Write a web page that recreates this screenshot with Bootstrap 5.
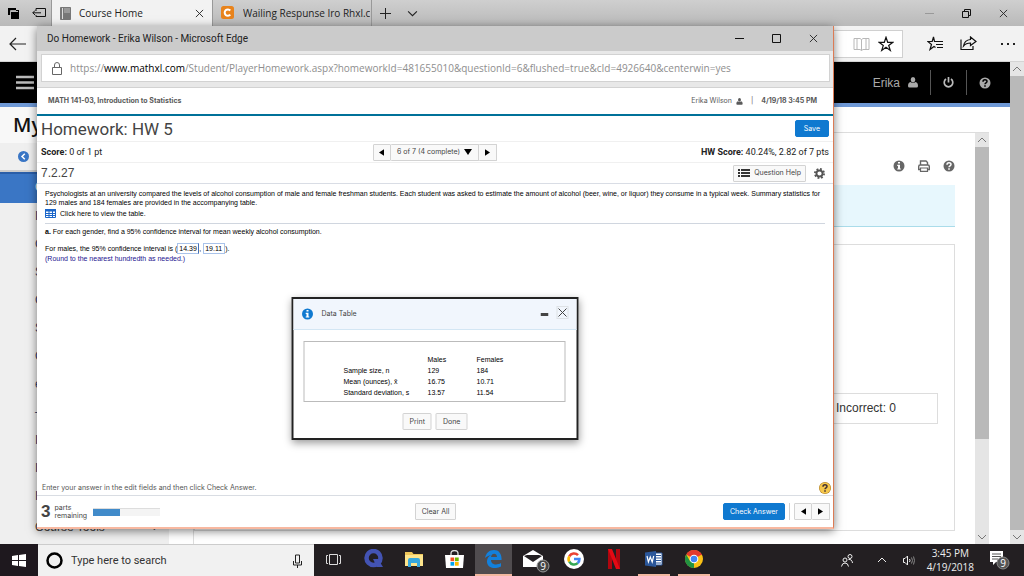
<!DOCTYPE html>
<html lang="en">
<head>
<meta charset="utf-8">
<meta name="viewport" content="width=device-width, initial-scale=1">
<title>Do Homework - Erika Wilson</title>
<link href="https://cdn.jsdelivr.net/npm/bootstrap@5.3.0/dist/css/bootstrap.min.css" rel="stylesheet">
<style>
:root{--edge:"Open Sans","Noto Sans",sans-serif;--page:"Liberation Sans",Arial,sans-serif;--ui:Roboto,"Liberation Sans",sans-serif;--mini:Inter,"Liberation Sans",sans-serif}
body{font-family:var(--page);font-size:12px;line-height:16px;color:#222}
svg{display:block;flex:none}
button{font:inherit;color:inherit;padding:0;border:0;background:none}
.screen{min-height:100vh}
/* main browser window */
.tabstrip{height:26px;background:linear-gradient(#cfcfcf,#b9b9b9);font:10px/14px var(--edge);color:#222}
.tabstrip .tools{width:52px;border-right:1px solid #999}
.tab-on,.tab-off{width:160px;font-size:10px}
.tab-on{background:#f2f2f2}
.tab-off{border-left:1px solid #999;border-right:1px solid #999}
.tab-off .label{font-size:10px;overflow:hidden;white-space:nowrap}
.navrow{height:36px;background:#f2f2f2;border-bottom:1px solid #d4d4d4}
.addr-end{width:80px;height:28px;background:#fff;border:1px solid #d0d0d0}
.blackbar{height:45px;background:#000;border-bottom:4px solid #6f99d6;color:#aaa;font:12px/16px var(--page)}
.blackbar .sep{width:1px;height:25px;background:#555}
.cell{width:35px;display:flex;justify-content:center}
.rail{width:14px;background:#b9b9b9}
.rail button{height:14px;background:#e5e5e5;color:#777}
.side{width:169px;background:#efefef}
.side-title{height:36px;background:#f8f8f8;padding-left:13px;font:600 20px/36px var(--edge);color:#111}
.side-home{height:29px;border-bottom:2px solid #ccc;padding-left:18px}
.side-list a{display:block;height:28px;padding-left:35px;font:12px/27px var(--page);color:#2f3f6b;text-decoration:none}
.side-list a.here{background:#3a76c5;color:#fff;height:31px;line-height:27px;border-top:2px solid #2a5ea8}
.side-list a.last{line-height:32px;color:#444}
.course{border-left:1px solid #ddd;border-top:1px solid #ddd;margin:25px 0 0 24px}
.course-main{padding-right:20px}
.course-icons{height:52px;padding-top:27px;color:#666;gap:13px}
.notice{height:42px;background:#e7f7fd;border-bottom:1px solid #aadcea}
.panel{margin-top:17px;margin-bottom:13px;border:1px solid #ddd}
.score-box{height:31px;width:120px;margin:148px 16px 0 auto;border:1px solid #ddd;padding-right:41px;font:12px/29px var(--page);color:#333;text-align:right;white-space:nowrap}
.inner-rail{width:14px;background:#e5e5e5}
.inner-rail button{height:14px;color:#777}
.inner-rail .thumb{background:#b9b9b9;flex:0 0 71%}
.outer{width:21px}
/* pop-up window */
.popwin{top:26px;right:190px;bottom:15px;left:37px;background:#fff;border-right:1px solid #dc7b55;border-bottom:2px solid #f8b8a0;box-shadow:0 2px 9px rgba(0,0,0,.5)}
.poptitle{height:25px;background:#cbcbcb;font:10px/14px var(--ui);padding:0 15px 0 10px}
.popurl{height:37px;background:#e8e8e8;border-bottom:1px solid #d2d2d2;padding:3px 3px 5px 4px}
.urlbox{background:#fff;border:1px solid #d2d2d2;font:10px/14px var(--edge);color:#8e8e8e;padding-left:10px}
.coursebar{height:28px;border-bottom:2px solid #007199;font:7px/12px var(--mini);color:#5a5a5a;padding:0 16px 0 11px}
.hw-row{padding:0 4px;border-bottom:1px solid #f0f0f0;color:#444}
.hw-title{height:26px;font:17px/22px var(--ui)}
.hw-score{height:21px;font:9px/12px var(--ui);color:#222}
.hw-id{height:21px;font:12px/16px var(--page);border-bottom-color:#d9dde5}
.btn-page{height:17px;border:1px solid #d3d3d3;border-radius:1px;background:#f9f9f9;font:7px/12px var(--mini);color:#444;padding:0 6px;display:flex;align-items:center;justify-content:center}
.btn-blue{background:#0f79d0;border-color:#0f79d0;color:#fff;border-radius:2px}
.pager>*+*{border-left:0}
.pager .step{width:18px;padding:0}
.question{padding:5px 8px;font:7px/9px var(--page);color:#000}
.question p,.question form{margin:0}
.question a{margin-top:2px}
.question form{margin-top:7px}
.question hr{margin:5px 0 3px;border-color:#bcc5d2;opacity:.7}
.answer{width:22px;height:11px;border:1px solid #a9c3ea;padding:0 1px;font:7px/9px var(--page);color:#000;outline:0}
.answer.cur{border-right-color:#456fb5}
.prompt{font:7px/12px var(--mini);color:#555;padding:0 2px 0 5px;height:15px}
.bottombar{height:32px;border-top:1px solid #d9dde3;padding:0 3px 0 4px;font:7px/8px var(--mini);color:#444}
.bottombar .count{font:700 17px/20px var(--page)}
.bar{width:67px;height:8px;background:#f4f4f4;border-radius:0;border-top:1px solid #ddd;margin-left:6px}
.bar div{background:#418bca}
.slot{flex:1 1 0}
/* data table dialog */
.datadlg{top:271px;width:287px;border:2px solid #222;background:#fff;box-shadow:0 3px 8px rgba(0,0,0,.4);font:7px/11px var(--page)}
.dlg-head{height:31px;background:#f1f6fd;border-bottom:1px solid #d3e6f4;padding:0 8px 0 8px;font:7px/12px var(--mini);color:#444}
.dlg-box{margin:11px 11px 11px 10px;border:1px solid #bbb;padding:12px 0 3px 39px}
.stats{border-collapse:collapse;color:#000;font-size:7px;line-height:11px}
.stats th,.stats td{padding:0;font-weight:400;text-align:left;height:11px}
.stats .w1{width:84px}.stats .w2{width:49px}
/* taskbar */
.taskbar{height:32px;background:#231f22;color:#eee;font:10px/14px var(--edge)}
.start{width:38px;background:#1e181e}
.search{width:276px;background:#f1f1f1;border-top:1px solid #ccc;padding:0 12px 0 8px}
.search input{border:0;background:none;outline:0;font:11px/16px var(--ui);color:#333;padding:0;min-width:0}
.search input::placeholder{color:#333;opacity:1}
.apps button{width:40px;border-bottom:2px solid transparent;display:flex;align-items:center;justify-content:center}
.apps .live{border-bottom-color:#f2b8a0}
.apps .short{width:32px;margin:0 4px}
.apps .active{background:#504c4f;width:37px;margin:0 2px 0 1px}
.tray{padding-right:14px}
</style>
</head>
<body>
<svg width="0" height="0" class="position-absolute" aria-hidden="true">
<symbol id="x" viewBox="0 0 10 10"><path d="M1 1l8 8M9 1L1 9" stroke="currentColor" fill="none"/></symbol>
<symbol id="up" viewBox="0 0 10 6"><path d="M1 5l4-4 4 4" stroke="currentColor" fill="none"/></symbol>
<symbol id="down" viewBox="0 0 10 6"><path d="M1 1l4 4 4-4" stroke="currentColor" fill="none"/></symbol>
<symbol id="user" viewBox="0 0 10 11"><path d="M5 0a2.400 2.700 0 012.300 2.700C7.300 4.300 6.200 5.400 5 5.400S2.700 4.300 2.700 2.700A2.400 2.700 0 015 0zM2.500 5Q5 7 7.500 5 10 5.600 10 9q0 1.500-1.500 1.500h-7Q0 10.500 0 9 0 5.600 2.500 5z" fill="currentColor"/></symbol>
<symbol id="help" viewBox="0 0 12 12"><circle cx="6" cy="6" r="5.500" fill="currentColor"/><path d="M4 4.700C4 2 8 2 8 4.500 8 5.900 6 5.800 6 7.300" fill="none" stroke="var(--k)" stroke-width="1.500"/><path d="M5.200 8.200h1.600v1.500H5.200z" fill="var(--k)"/></symbol>
<symbol id="info" viewBox="0 0 12 12"><circle cx="6" cy="6" r="5.500" fill="currentColor"/><path d="M5 2h2v1.600H5zM4.200 4.800H7v3.600h.8v1.200H4.200V8.400H5V6h-.8z" fill="#fff"/></symbol>
<symbol id="tl" viewBox="0 0 6 8"><path d="M6 0v8L0 4z"/></symbol>
<symbol id="tr" viewBox="0 0 6 8"><path d="M0 0v8l6-4z"/></symbol>
</svg>
<div class="screen d-flex flex-column">
<div class="flex-grow-1 d-flex flex-column position-relative overflow-hidden">

  <header class="tabstrip d-flex">
    <div class="tools d-flex align-items-center justify-content-between ps-2 pe-1">
      <svg width="12" height="11"><path d="M0 0h8v2h3v9H3V7H0z" fill="#000"/><path d="M3 3.500h7" stroke="#bbb"/><path d="M2.500 7V2.500H8" stroke="#aaa" fill="none"/></svg>
      <svg width="15" height="10" fill="none" stroke="#111"><path d="M4 3V.5h9.500v8H4V7M.8 4.800H9M3 2.500L.8 4.800 3 7"/></svg>
    </div>
    <div class="tab-on d-flex align-items-center px-2">
      <svg width="11" height="13" class="me-2"><path d="M.5.500h10v12H.5z" fill="#777" stroke="#777"/><path d="M2 1h1v11H2z" fill="#ddd"/><path d="M4 1h6v5H4z" fill="#999"/></svg>
      <span class="flex-grow-1">Course Home</span>
      <button aria-label="Close tab"><svg width="9" height="9"><use href="#x"/></svg></button>
    </div>
    <div class="tab-off d-flex align-items-center ps-1">
      <svg width="14" height="14" class="ms-1 me-2"><rect width="13" height="13" rx="2.500" fill="#e8831c"/><path d="M9.300 4.500a3.200 3.200 0 100 4.200" fill="none" stroke="#fff" stroke-width="2"/></svg>
      <span class="label">Wailing Respunse Iro Rhxl.c</span>
    </div>
    <button class="ms-2" aria-label="New tab"><svg width="11" height="11" stroke="#222"><path d="M5.500 0v11M0 5.500h11"/></svg></button>
    <button class="ms-3" aria-label="Tab list"><svg width="11" height="7"><use href="#down"/></svg></button>
    <div class="ms-auto d-flex align-items-center gap-4 pe-3">
      <button class="me-1" aria-label="Minimize"><svg width="9" height="9" stroke="#999"><path d="M0 4.500h9"/></svg></button>
      <button class="me-1" aria-label="Restore"><svg width="9" height="9" fill="none" stroke="#111"><path d="M.5 2.500h6v6h-6zM2.500 2V.5h6v6H7"/></svg></button>
      <button aria-label="Close"><svg width="9" height="9"><use href="#x"/></svg></button>
    </div>
  </header>

  <div class="navrow d-flex align-items-center justify-content-between">
    <button class="ms-2" aria-label="Back"><svg width="18" height="14" fill="none" stroke="#222" stroke-width="1.200"><path d="M2 7h16M8 1L2 7l6 6"/></svg></button>
    <div class="d-flex align-items-center pe-2">
      <div class="addr-end d-flex align-items-center justify-content-end gap-2 pe-2">
        <svg width="17" height="14" fill="none" stroke="#b8b8b8"><path d="M1 1.500h6l1.500 1L10 1.500h6v11h-6l-1.500 1-1.500-1H1zM8.500 2.500v11M4 1v11M13 1v11"/></svg>
        <svg width="16" height="16" fill="none" stroke="#111" stroke-width="1.200"><path d="M8 1.300l1.700 5h5.200l-4.200 3.100 1.600 5L8 11.300l-4.300 3.100 1.600-5L1.100 6.300h5.200z"/></svg>
      </div>
      <button class="ms-4" aria-label="Favorites"><svg width="17" height="15" fill="none" stroke="#111" stroke-width="1.200"><path d="M10 5.500H7.500L6.500 1 5.200 5.500H.8l3.700 3-1.500 5 4-3 1.500 1M10 5.500h6M9 8.500h7M10 11.500h6"/></svg></button>
      <button class="ms-3" aria-label="Share"><svg width="17" height="15" fill="none" stroke="#111" stroke-width="1.200"><path d="M1 3.500v10h12V10M10.500 1L16 5.500l-5.500 4V7Q6 7 3.500 10 4.500 4 10.500 3.500z"/></svg></button>
      <button class="ms-4" aria-label="More"><svg width="15" height="4" fill="#222"><path d="M0 1h2v2H0zM6 1h2v2H6zM12 1h2v2h-2z"/></svg></button>
    </div>
  </div>

  <div class="flex-grow-1 d-flex">
    <div class="flex-grow-1 d-flex flex-column">
      <div class="blackbar d-flex align-items-center">
        <svg width="19" height="15" class="ms-3" stroke="#bbb" stroke-width="2.500"><path d="M0 2h18M0 7.500h18M0 13h18"/></svg>
        <div class="ms-auto d-flex align-items-center pe-2">
          <span>Erika</span><svg width="10" height="11" class="ms-2 me-2"><use href="#user"/></svg>
          <span class="sep ms-1"></span>
          <button class="cell" aria-label="Sign out"><svg width="11" height="12" fill="none" stroke="#bbb" stroke-width="1.700"><path d="M5.500 0v5.500M3 2a4.300 4.300 0 105 0"/></svg></button>
          <span class="sep"></span>
          <button class="cell" aria-label="Help" style="--k:#000"><svg width="12" height="12"><use href="#help"/></svg></button>
        </div>
      </div>
      <div class="flex-grow-1 d-flex">
        <aside class="side">
          <div class="side-title">My</div>
          <div class="side-home d-flex align-items-center"><svg width="11" height="11"><circle cx="5.500" cy="5.500" r="5.500" fill="#3a76c5"/><path d="M6.800 2.700L4 5.500l2.800 2.800" fill="none" stroke="#fff" stroke-width="1.500"/></svg><span class="ms-1 ps-1">I</span></div>
          <nav class="side-list">
            <a class="here" href="#">C</a><a href="#">I</a><a href="#">C</a><a href="#">S</a><a href="#">C</a><a href="#">S</a><a href="#">C</a><a href="#">e</a><a href="#">–</a><a href="#">I</a><a href="#">I</a><a href="#">I</a><a class="last d-flex justify-content-between pe-2" href="#"><span>Course Tools</span><span class="pe-1">›</span></a>
          </nav>
        </aside>
        <main class="flex-grow-1 d-flex">
          <div class="course flex-grow-1 d-flex">
            <div class="course-main flex-grow-1 d-flex flex-column">
              <div class="course-icons d-flex justify-content-end" style="--k:#fff">
                <svg width="12" height="12"><use href="#info"/></svg>
                <svg width="12" height="12"><path d="M2.500 5V1H8l1.500 1.500V5M.7 9.500v-3Q.7 5 2 5h8q1.300 0 1.300 1.500v3z" fill="none" stroke="currentColor" stroke-width="1.400"/><path d="M2.500 8h7v3.300h-7z" fill="#fff" stroke="currentColor" stroke-width="1.200"/></svg>
                <svg width="12" height="12"><use href="#help"/></svg>
              </div>
              <div class="notice"></div>
              <div class="panel flex-grow-1"><div class="score-box">Incorrect: 0</div></div>
            </div>
            <div class="inner-rail d-flex flex-column">
              <button aria-label="Scroll up"><svg width="10" height="6" class="mx-auto"><use href="#up"/></svg></button>
              <div class="thumb"></div>
              <button class="mt-auto" aria-label="Scroll down"><svg width="10" height="6" class="mx-auto"><use href="#down"/></svg></button>
            </div>
          </div>
          <div class="outer"></div>
        </main>
      </div>
    </div>
    <div class="rail d-flex flex-column justify-content-between">
      <button aria-label="Page up"><svg width="10" height="6" class="mx-auto"><use href="#up"/></svg></button>
      <button aria-label="Page down"><svg width="10" height="6" class="mx-auto"><use href="#down"/></svg></button>
    </div>
  </div>

  <section class="popwin position-absolute d-flex flex-column">
    <div class="poptitle d-flex align-items-center">
      <span class="flex-grow-1">Do Homework - Erika Wilson - Microsoft Edge</span>
      <button class="me-4" aria-label="Minimize"><svg width="9" height="9" stroke="#111"><path d="M0 4.500h9"/></svg></button>
      <button class="mx-1" aria-label="Maximize"><svg width="9" height="9" fill="none" stroke="#111"><path d="M.5.500h8v8h-8z"/></svg></button>
      <button class="ms-4" aria-label="Close"><svg width="9" height="9"><use href="#x"/></svg></button>
    </div>
    <div class="popurl d-flex">
      <div class="urlbox flex-grow-1 d-flex align-items-center">
        <svg width="10" height="13" class="me-2" fill="none" stroke="#666"><path d="M.5 5.500h9v7h-9zM2.500 5.500V3q0-2.500 2.500-2.500T7.500 3v2.500"/></svg>
        <span>https://<span class="text-black">www.mathxl.com</span>/Student/PlayerHomework.aspx?homeworkId=481655010&amp;questionId=6&amp;flushed=true&amp;cId=4926640&amp;centerwin=yes</span>
      </div>
    </div>
    <div class="coursebar d-flex align-items-center">
      <b class="me-auto">MATH 141-03, Introduction to Statistics</b>
      <span>Erika Wilson</span><svg width="7" height="7" class="ms-1"><use href="#user"/></svg><span class="mx-2">|</span><b>4/19/18 3:45 PM</b>
    </div>
    <div class="hw-row hw-title d-flex align-items-center"><span class="flex-grow-1">Homework: HW 5</span><button class="btn-page btn-blue px-2">Save</button></div>
    <div class="hw-row hw-score d-flex align-items-center">
      <div class="slot"><b>Score:</b> 0 of 1 pt</div>
      <div class="pager d-flex">
        <button class="btn-page step" aria-label="Previous question"><svg width="5" height="7"><use href="#tl"/></svg></button>
        <button class="btn-page">6 of 7 (4 complete)<svg width="8" height="6" class="ms-1"><path d="M0 0h8L4 6z"/></svg></button>
        <button class="btn-page step" aria-label="Next question"><svg width="5" height="7"><use href="#tr"/></svg></button>
      </div>
      <div class="slot text-end"><b>HW Score:</b> 40.24%, 2.82 of 7 pts</div>
    </div>
    <div class="hw-row hw-id d-flex align-items-center">
      <span class="flex-grow-1">7.2.27</span>
      <button class="btn-page px-1 me-2"><svg width="12" height="8" class="me-1" stroke="#333" stroke-width="2"><path d="M3 1h9M3 4h9M3 7h9M0 1h2M0 4h2M0 7h2"/></svg>Question Help</button>
      <button aria-label="Settings"><svg width="11" height="11" viewBox="0 0 12 12" class="me-1"><circle cx="6" cy="6" r="3.300" fill="none" stroke="#555" stroke-width="2"/><circle cx="6" cy="6" r="5" fill="none" stroke="#555" stroke-width="2" stroke-dasharray="2 1.927"/></svg></button>
    </div>
    <div class="question flex-grow-1">
      <p>Psychologists at an university compared the levels of alcohol consumption of male and female freshman students. Each student was asked to estimate the amount of alcohol (beer, wine, or liquor) they consume in a typical week. Summary statistics for 129 males and 184 females are provided in the accompanying table.</p>
      <a href="#" class="d-flex align-items-center text-reset text-decoration-none gap-1"><svg width="11" height="9"><path d="M.5.500h10v8H.5z" fill="#fff" stroke="#1b66c9"/><path d="M0 0h11v2.500H0z" fill="#1b66c9"/><path d="M4 2v7M7.500 2v7M0 4.500h11M0 6.500h11" stroke="#1b66c9"/></svg>Click here to view the table.</a>
      <hr>
      <p><b>a.</b> For each gender, find a 95% confidence interval for mean weekly alcohol consumption.</p>
      <form class="d-flex align-items-center"><label for="lo">For males, the 95% confidence interval is (</label><input id="lo" class="answer cur" value="14.39"><label for="hi">,&nbsp;</label><input id="hi" class="answer" value="19.11">).</form>
      <p style="color:#1c1390">(Round to the nearest hundredth as needed.)</p>
    </div>
    <div class="prompt d-flex align-items-center justify-content-between">
      <span>Enter your answer in the edit fields and then click Check Answer.</span>
      <button aria-label="Tips"><svg width="12" height="12" viewBox="0 0 12 12" style="--k:#433"><circle cx="6" cy="6" r="6" fill="#a97924"/><use href="#help" color="#f5c74c"/></svg></button>
    </div>
    <div class="bottombar d-flex align-items-center">
      <div class="slot d-flex align-items-center"><span class="count me-1">3</span><span>parts<br>remaining</span>
        <div class="progress bar"><div class="progress-bar" style="width:40%"></div></div></div>
      <button class="btn-page">Clear All</button>
      <div class="slot d-flex justify-content-end gap-1">
        <button class="btn-page btn-blue">Check Answer</button><div class="vr"></div>
        <div class="pager d-flex"><button class="btn-page step" aria-label="Previous"><svg width="5" height="7"><use href="#tl"/></svg></button><button class="btn-page step" aria-label="Next"><svg width="5" height="7"><use href="#tr"/></svg></button></div>
      </div>
    </div>

    <div class="datadlg position-absolute start-50 translate-middle-x">
      <div class="dlg-head d-flex align-items-center">
        <svg width="12" height="12" class="me-2" color="#0f79d0"><use href="#info"/></svg><span class="flex-grow-1">Data Table</span>
        <button class="me-2" aria-label="Minimize dialog"><svg width="8" height="3"><path d="M0 0h8v3H0z" fill="#444"/></svg></button>
        <button class="mb-1" aria-label="Close dialog"><svg width="12" height="13" class="border"><use href="#x"/></svg></button>
      </div>
      <div class="dlg-box">
        <table class="stats">
          <thead><tr><td class="w1"></td><th class="w2">Males</th><th>Females</th></tr></thead>
          <tbody><tr><th>Sample size, n</th><td>129</td><td>184</td></tr>
          <tr><th>Mean (ounces), x̄</th><td>16.75</td><td>10.71</td></tr>
          <tr><th>Standard deviation, s</th><td>13.57</td><td>11.54</td></tr></tbody>
        </table>
      </div>
      <div class="d-flex justify-content-center gap-1 pb-2"><button class="btn-page">Print</button><button class="btn-page">Done</button></div>
    </div>
  </section>
</div>

<footer class="taskbar d-flex">
  <button class="start d-flex align-items-center justify-content-center" aria-label="Start"><svg width="14" height="13" fill="#fff"><path d="M0 2l6-1v5H0zM7 .9L14 0v6H7zM0 7h6v5l-6-1zM7 7h7v6l-7-1z"/></svg></button>
  <label class="search d-flex align-items-center gap-2"><svg width="17" height="17"><circle cx="8.500" cy="8.500" r="7" fill="none" stroke="#000" stroke-width="2.500"/></svg>
    <input class="flex-grow-1" type="text" placeholder="Type here to search" aria-label="Search">
    <svg width="9" height="14" fill="none" stroke="#222"><path d="M2.500 1h4v8h-4zM.5 7v4h8V7M4.500 11v3"/></svg></label>
  <div class="apps d-flex">
    <button aria-label="Task view"><svg width="16" height="11" fill="none" stroke="#ddd"><path d="M3.500.500h8v10h-8zM2 1.500H.5v8H2M13 1.500h1.500v8H13"/></svg></button>
    <button aria-label="Quicken"><svg width="20" height="20"><circle cx="9.500" cy="9" r="7" fill="none" stroke="#4353b3" stroke-width="4.500"/><path d="M9 10h5l5 8h-6z" fill="#4353b3"/></svg></button>
    <button aria-label="File Explorer"><svg width="18" height="15"><path d="M0 0h7l1.500 2H18v12H0z" fill="#eec65a"/><path d="M0 3h18v11H0z" fill="#fde48c"/><path d="M3 15V8q0-2 2-2h8q2 0 2 2v7h-3v-4H6v4z" fill="#37a8dd"/></svg></button>
    <button aria-label="Store"><svg width="19" height="19"><path d="M6 6V3.500a3.500 3 0 017 0V6" fill="none" stroke="#ddd" stroke-width="1.300"/><path d="M0 5h19l-1 13H1z" fill="#fff"/><path d="M5.500 7.500h3.700v3.700H5.500z" fill="#f25022"/><path d="M10 7.500h3.700v3.700H10z" fill="#6bb700"/><path d="M5.500 12h3.700v3.700H5.500z" fill="#00a4ef"/><path d="M10 12h3.700v3.700H10z" fill="#ffb900"/></svg></button>
    <button class="live active" aria-label="Edge"><svg width="17" height="18"><path d="M0 8C1 3 4 0 9 0c5 0 8 4 7.500 10H6c0 5 6 5.500 10 3v3.500C9 20 1.500 17.500 2 11c.2-3 2-5 4-6C3.500 5.500 1.500 6.500 0 8zm6-1h6C12 2.500 6.500 2.500 6 7z" fill="#1380dc"/></svg></button>
    <button aria-label="Mail"><svg width="27" height="23" class="ms-1 mt-1"><path d="M0 6l10-6 10 6v11H0z" fill="#fff"/><path d="M1 6l9 6 9-6-3-1H4z" fill="#231f22"/><circle cx="20" cy="16" r="6" fill="#444" stroke="#999"/><text x="20" y="19.500" font-size="10" text-anchor="middle" fill="#fff">9</text></svg></button>
    <button aria-label="Google"><svg width="20" height="20" viewBox="0 0 20 20"><circle cx="10" cy="10" r="10" fill="#fff"/><g fill="none" stroke-width="2.600"><path d="M14 6.200A5.400 5.400 0 005.300 7.300" stroke="#ea4335"/><path d="M5.300 7.300a5.400 5.400 0 000 5.400" stroke="#fbbc05"/><path d="M5.300 12.700a5.400 5.400 0 008.400 1.400" stroke="#34a853"/><path d="M13.700 14.100A5.400 5.400 0 0015.400 10H10" stroke="#4285f4"/></g></svg></button>
    <button aria-label="Netflix"><svg width="12" height="20"><path d="M0 0h4v20l-4 .3zM8 0h4v20l-4-.2z" fill="#b1060f"/><path d="M0 0h4l8 20H8z" fill="#e50914"/></svg></button>
    <button class="live short" aria-label="Word"><svg width="18" height="16"><path d="M9 2h8v12H9z" fill="#fff" stroke="#2b579a"/><path d="M10 4.500h6M10 7h6M10 9.500h6M10 12h6" stroke="#2b579a"/><path d="M0 1.500L11 0v16L0 14.500z" fill="#2b579a"/><path d="M2 5l1.400 6L5.300 6l1.900 5L8.700 5" fill="none" stroke="#fff" stroke-width="1.200"/></svg></button>
    <button class="live short" aria-label="Chrome"><svg width="18" height="18" viewBox="0 0 18 18"><circle cx="9" cy="9" r="9" fill="#fbc116"/><path d="M9 9L1.200 4.500A9 9 0 0116.800 4.500z" fill="#e33b2e"/><path d="M9 9l0 9A9 9 0 011.200 4.500L5.100 11.200z" fill="#229342"/><path d="M9 5h7.900l-.6-1.200H5z" fill="#e33b2e"/><circle cx="9" cy="9" r="4.300" fill="#fff"/><circle cx="9" cy="9" r="3.300" fill="#4285f4"/></svg></button>
  </div>
  <div class="tray ms-auto d-flex align-items-center">
    <svg width="12" height="13" class="me-4" fill="none" stroke="#eee"><circle cx="4" cy="6" r="2"/><path d="M.5 12.500Q1 9 4 9t3.500 3.500"/><circle cx="9" cy="2.500" r="2"/><path d="M7.500 5.500Q11 5 11.500 9"/></svg>
    <svg width="10" height="6" class="me-3"><use href="#up"/></svg>
    <svg width="12" height="11" class="me-2" fill="none" stroke="#eee"><path d="M.5 3.500H2L4.500 1v9L2 7.500H.5zM6.500 4q1 1.500 0 3"/><path d="M8.500 2.500q2 3 0 6M10.500 1.500q2 4 0 8" stroke="#888"/></svg>
    <div class="text-center ms-1 me-3">3:45 PM<br>4/19/2018</div>
    <svg width="20" height="20"><path d="M0 1h13v11H6l-3 3v-3H0z" fill="#fff"/><path d="M2 4h9M2 6.500h9M2 9h6" stroke="#555"/><circle cx="13" cy="13" r="6" fill="#555" stroke="#888"/><text x="13" y="16.500" font-size="10" text-anchor="middle" fill="#fff">9</text></svg>
  </div>
</footer>
</div>
<script src="https://cdn.jsdelivr.net/npm/bootstrap@5.3.0/dist/js/bootstrap.bundle.min.js"></script>
</body>
</html>
